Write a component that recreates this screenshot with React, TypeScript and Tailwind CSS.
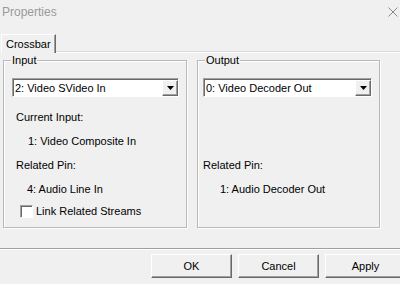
import React from 'react';

const Combo = ({value, className}: {value: string; className: string}) => (
  <div
    className={`flex h-[19px] items-stretch bg-white border-t border-l border-[#a0a0a0] border-b border-r border-b-white border-r-white shadow-[inset_1px_1px_0_#696969] ${className}`}>
    <div className="flex-1 pl-[2px] pt-[1px] flex items-center leading-none">{value}</div>
    <div
      className="w-[16px] mt-[1px] flex items-center justify-center bg-[#f0f0f0] border-t border-l border-white border-b border-r border-b-[#696969] border-r-[#696969] shadow-[inset_-1px_-1px_0_#a0a0a0]">
      <svg width="7" height="4" viewBox="0 0 7 4">
        <polygon points="0,0 7,0 3.5,4" fill="#000"/>
      </svg>
    </div>
  </div>
);

const Group = ({label, className, children}: { label: string; className: string; children: React.ReactNode }) => (
  <div
    className={`relative h-[168px] border border-[#b9b9b9] shadow-[inset_1px_1px_0_#fff,1px_1px_0_#fff] ${className}`}>
    <div className="absolute -top-[8px] left-[7px] px-[1px] bg-[#f0f0f0] leading-[14px]">{label}</div>
    {children}
  </div>
);

const Row = ({children, className = ''}: { children?: React.ReactNode; className?: string }) => (
  <div className={`h-[24px] flex items-center ${className}`}>{children}</div>
);

const Button = ({label}: { label: string }) => (
  <div
    className="w-[81px] h-[24px] shrink-0 flex items-center justify-center bg-[#f0f0f0] border-t border-l border-white border-b border-r border-b-[#696969] border-r-[#696969] shadow-[inset_-1px_-1px_0_#a0a0a0]">
    {label}
  </div>
);

export default function App() {
  return (
    <div
      className="w-[400px] h-[284px] overflow-hidden bg-[#f0f0f0] flex flex-col text-[11px] text-black font-['Liberation_Sans',Arial,sans-serif]">
      {/* title bar */}
      <div className="h-[30px] shrink-0 flex justify-between items-start">
        <div className="pl-[2px] pt-[4px] text-[12px] leading-[16px] text-[#9a9a9a]">Properties</div>
        <svg className="mt-[7px] mr-[2px]" width="10" height="10" viewBox="0 0 10 10">
          <path d="M0.5 0.5 L9.5 9.5 M9.5 0.5 L0.5 9.5" stroke="#8a8a8a" strokeWidth="1" fill="none"/>
        </svg>
      </div>

      {/* tab strip */}
      <div className="h-[23px] shrink-0 flex">
        <div
          className="self-end h-[19px] ml-[1px] pl-[4px] pr-[4px] flex items-center border-t border-l border-white border-r border-r-[#696969] shadow-[inset_-1px_0_0_#a0a0a0]">
          Crossbar
        </div>
        <div className="self-end flex-1 h-[2px] border-t border-[#dcdcdc] bg-white"/>
      </div>

      {/* tab panel */}
      <div className="h-[195px] shrink-0 pt-[7px] pl-[3px] flex gap-[10px]">
        <Group label="Input" className="w-[184px]">
          <Combo value="2: Video SVideo In" className="mt-[17px] ml-[8px] w-[167px]"/>
          <div className="mt-[8px]">
            <Row className="pl-[12px]">Current Input:</Row>
            <Row className="pl-[24px]">1: Video Composite In</Row>
            <Row className="pl-[12px]">Related Pin:</Row>
            <Row className="pl-[23px]">4: Audio Line In</Row>
            <Row className="pl-[16px] -mt-[2px]">
              <div
                className="w-[13px] h-[13px] bg-white border-t border-l border-[#a0a0a0] border-b border-r border-b-white border-r-white shadow-[inset_1px_1px_0_#696969]"/>
              <span className="ml-[3px]">Link Related Streams</span>
            </Row>
          </div>
        </Group>
        <Group label="Output" className="w-[183px]">
          <Combo value="0: Video Decoder Out" className="mt-[17px] ml-[5px] w-[169px]"/>
          <div className="mt-[8px]">
            <Row/>
            <Row/>
            <Row className="pl-[5px]">Related Pin:</Row>
            <Row className="pl-[22px]">1: Audio Decoder Out</Row>
          </div>
        </Group>
      </div>

      {/* separator */}
      <div className="h-[2px] shrink-0 border-t border-[#a0a0a0] bg-white"/>

      {/* buttons */}
      <div className="flex-1 pt-[4px] pl-[151px] flex gap-[6px] items-start">
        <Button label="OK"/>
        <Button label="Cancel"/>
        <Button label="Apply"/>
      </div>
    </div>
  );
}
